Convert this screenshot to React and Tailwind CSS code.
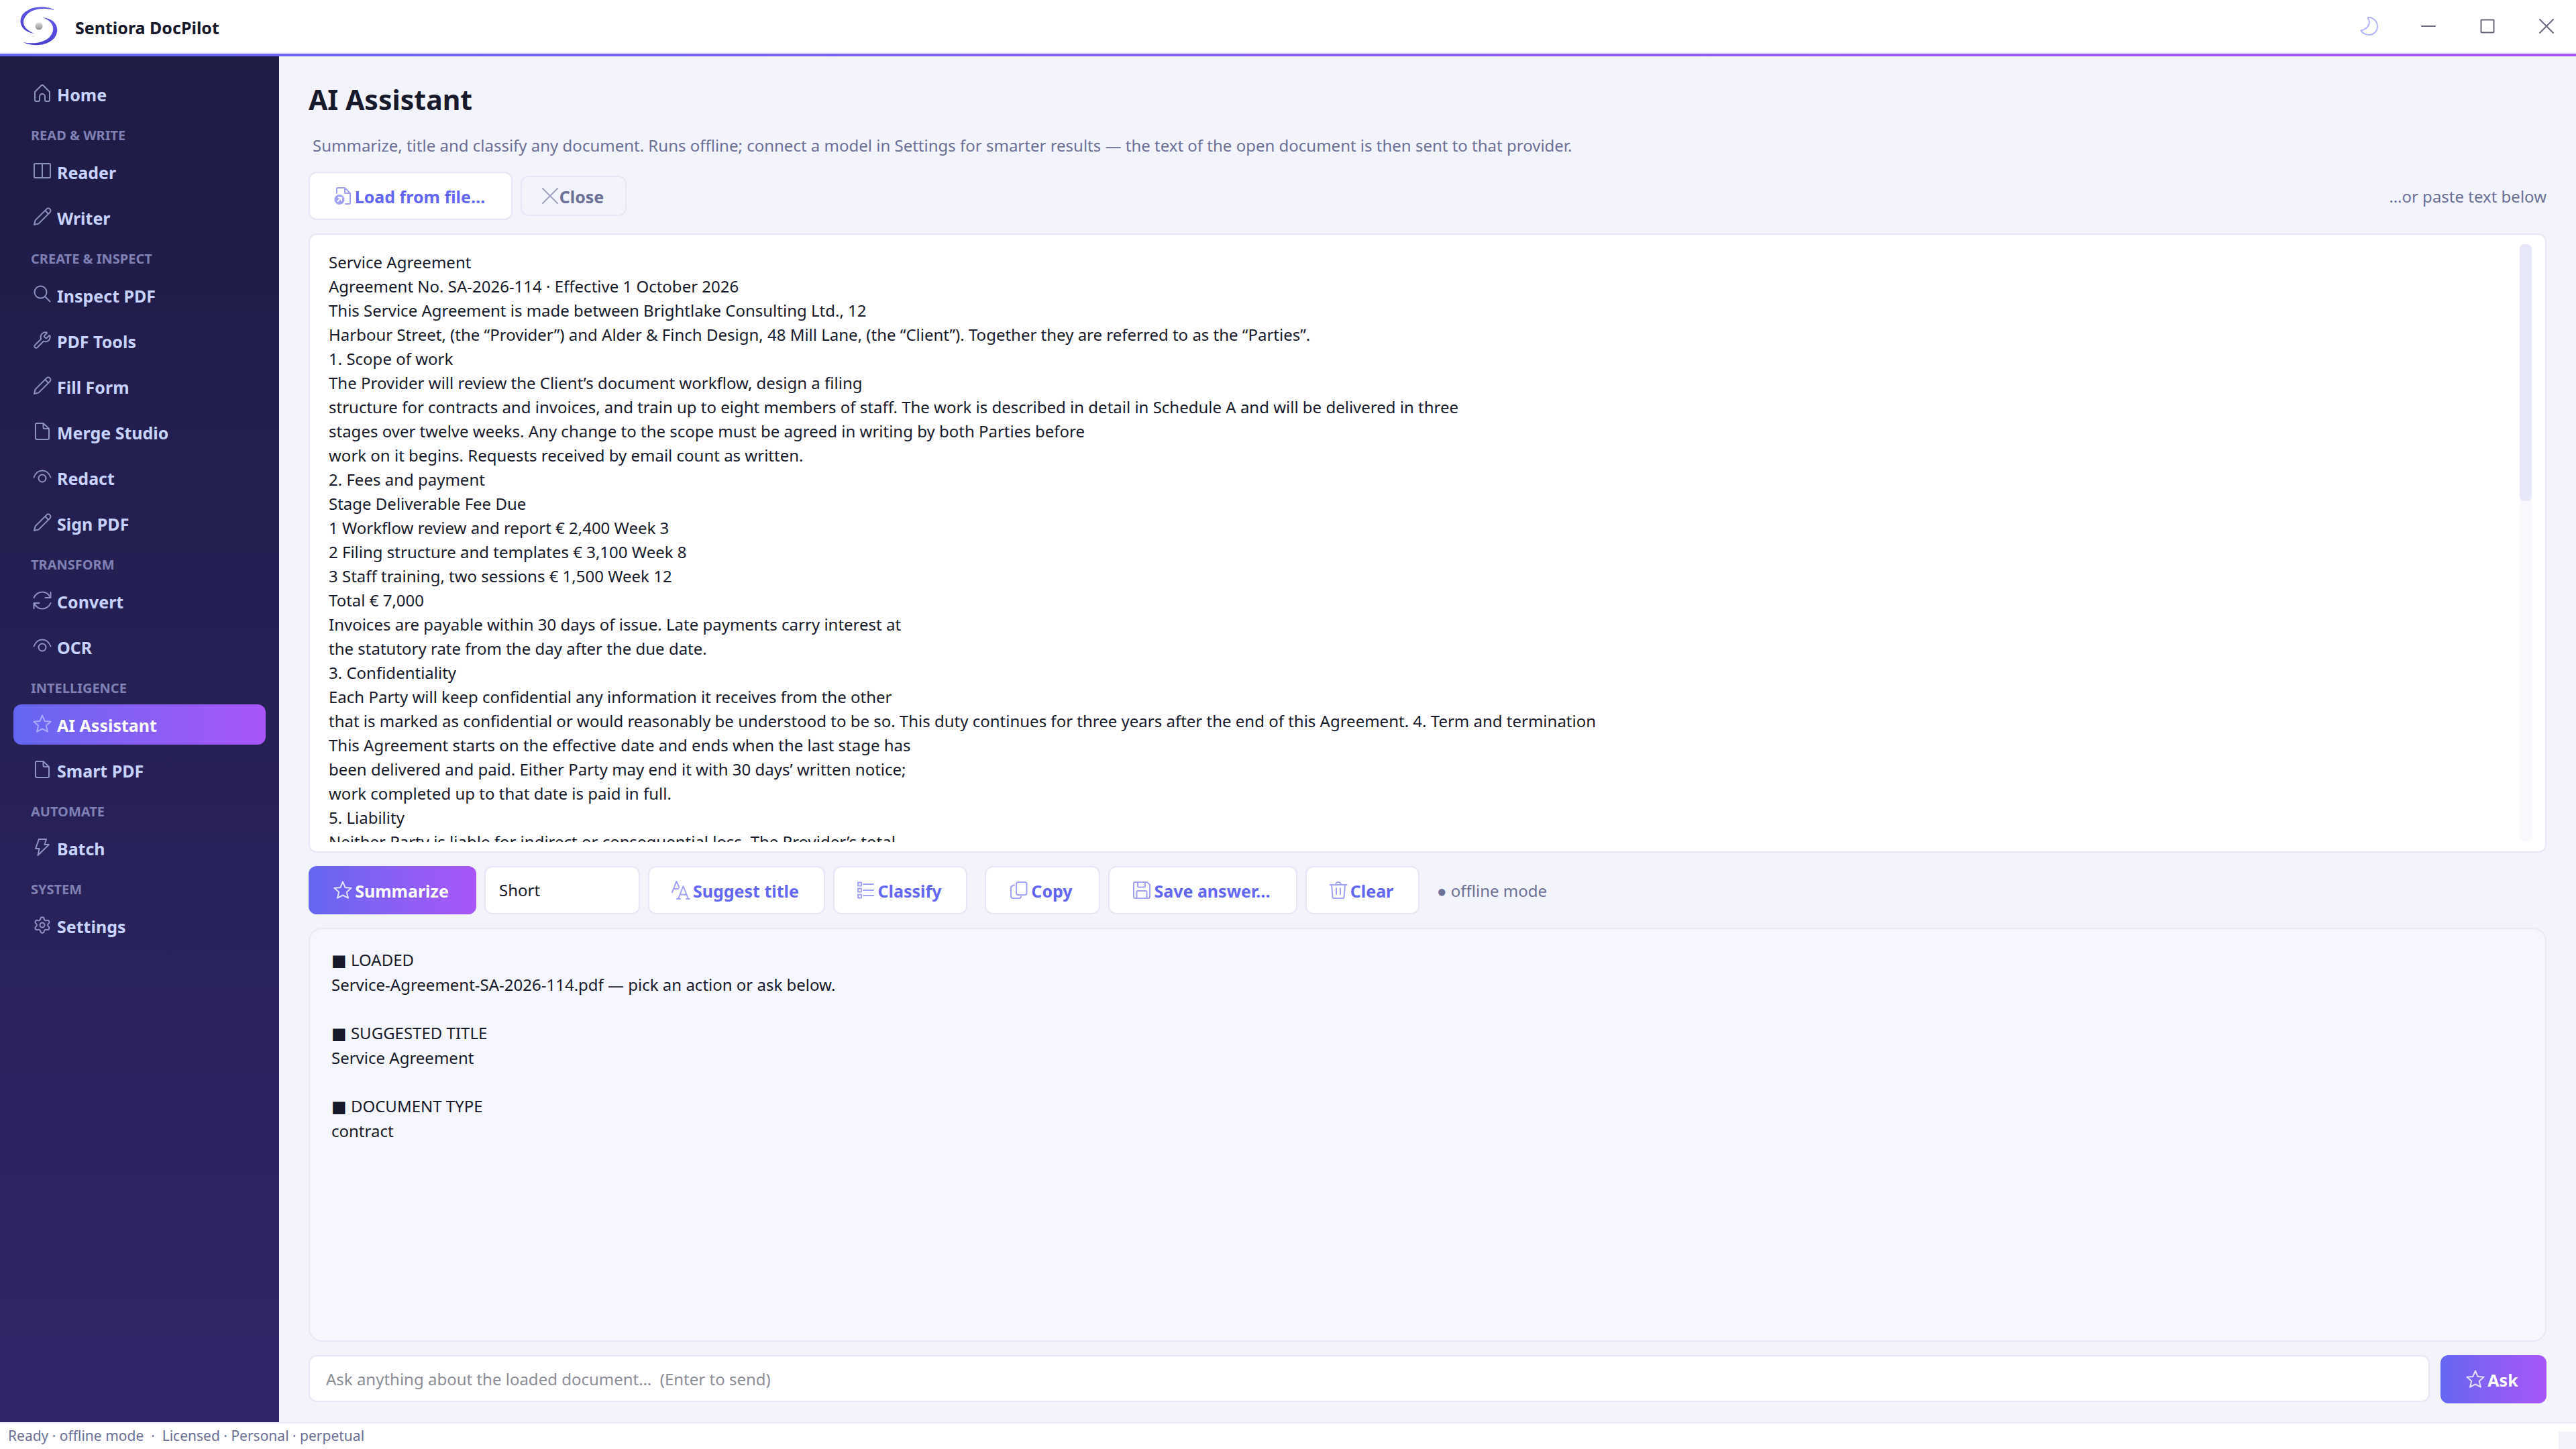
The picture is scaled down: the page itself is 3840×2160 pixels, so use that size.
import React, { useState } from 'react';
import { Settings, Wrench } from 'lucide-react';

const Svg = ({ children }) => (
  <svg
    viewBox="0 0 28 28"
    fill="none"
    stroke="currentColor"
    strokeWidth="2"
    strokeLinejoin="round"
    strokeLinecap="round"
    aria-hidden="true"
    className="size-7 shrink-0"
  >
    {children}
  </svg>
);

const HomeIcon = () => (
  <Svg>
    <path d="M3 12 12.7 2.2a1.8 1.8 0 0 1 2.6 0L25 12v12a2 2 0 0 1-2 2h-3a2 2 0 0 1-2-2v-5a4 4 0 0 0-8 0v5a2 2 0 0 1-2 2H5a2 2 0 0 1-2-2z" />
  </Svg>
);

const BookIcon = () => (
  <Svg>
    <rect x="2" y="3" width="24" height="21" rx="1" />
    <path d="M14 3v21" />
  </Svg>
);

const PencilIcon = () => (
  <Svg>
    <path d="M2 26l1.6-6.6L20.4 2.6a3.4 3.4 0 0 1 5 5L8.6 24.4zM18.2 4.8l5 5" />
  </Svg>
);

const SearchIcon = () => (
  <Svg>
    <circle cx="11.5" cy="10.5" r="9" />
    <path d="M18 17l7.5 7.5" />
  </Svg>
);

const WrenchIcon = () => <Wrench strokeWidth={1.7} className="size-7 shrink-0" aria-hidden="true" />;

const GearIcon = () => <Settings strokeWidth={1.7} className="size-7 shrink-0" aria-hidden="true" />;

const FileIcon = () => (
  <Svg>
    <path d="M15.5 2H6a2 2 0 0 0-2 2v20a2 2 0 0 0 2 2h16a2 2 0 0 0 2-2V10zM15.5 2v6a2 2 0 0 0 2 2H24" />
  </Svg>
);

const EyeIcon = () => (
  <Svg>
    <path d="M1.5 14.5C4 8 8.5 4.5 14 4.5S24 8 26.5 14.5" />
    <circle cx="14" cy="16" r="5.5" />
  </Svg>
);

const SyncIcon = () => (
  <Svg>
    <path d="M1.5 10C3.5 5 8.5 1.5 14 1.5c5 0 9.5 3 12 8M26.5 2v8h-8M26.5 18c-2 5-7 8.5-12.5 8.5-5 0-9.5-3-12-8M1.5 26v-8h8" />
  </Svg>
);

const StarIcon = () => (
  <Svg>
    <path d="M14 1.5l3.6 8.4 9 .8-6.8 6 2.2 9-8-4.2-8 4.2 2.2-9-6.8-6 9-.8z" />
  </Svg>
);

const BoltIcon = () => (
  <Svg>
    <path d="M9 2h11l-2.5 8H24L7.5 26l2-10H4z" />
  </Svg>
);

const LoadIcon = () => (
  <Svg>
    <path d="M5 10V3.5A1.5 1.5 0 0 1 6.5 2H17l8 8v14.5a1.5 1.5 0 0 1-1.5 1.5H18M17 2v8h8" />
    <circle cx="9" cy="19.5" r="7.5" fill="currentColor" stroke="none" />
    <path d="M6.5 22l5-5M7.5 16.5H12V21" stroke="white" />
  </Svg>
);

const XIcon = () => (
  <Svg>
    <path d="M3 3l22 22M25 3L3 25" />
  </Svg>
);

const TitleIcon = () => (
  <Svg>
    <path d="M1 17L7.5 1l4 9M3.500 12H10M10 27l7.500-19L25 27M12.500 20.500H22M8 27h5M22 27h5" />
  </Svg>
);

const ListIcon = () => (
  <Svg>
    <path d="M3 2.5h5v5H3zM3 11.5h5v5H3zM3 20.5h5v5H3zM11 5h15M11 14h15M11 22h15" />
  </Svg>
);

const CopyIcon = () => (
  <Svg>
    <rect x="10" y="2" width="15.5" height="19" rx="3" />
    <path d="M7 6.5l-3 1a3 3 0 0 0-2 3V23a3 3 0 0 0 3 3h9a3 3 0 0 0 3-2.5" />
  </Svg>
);

const SaveIcon = () => (
  <Svg>
    <path d="M4 2h18l4 4v18a2 2 0 0 1-2 2H4a2 2 0 0 1-2-2V4a2 2 0 0 1 2-2zM8 2v6a1.5 1.5 0 0 0 1.5 1.5h8A1.5 1.5 0 0 0 19 8V2M6.5 26v-9.5A1.5 1.5 0 0 1 8 15h12a1.5 1.5 0 0 1 1.5 1.5V26" />
  </Svg>
);

const TrashIcon = () => (
  <Svg>
    <path d="M1.5 6h25M4 6l1.5 18.5a2 2 0 0 0 2 1.5h13a2 2 0 0 0 2-1.5L24 6M10 6a4 4 0 0 1 8 0M11 11v9M17 11v9" />
  </Svg>
);

const Logo = () => (
  <svg viewBox="0 0 60 60" className="size-[60px]" aria-hidden="true">
    <defs>
      <linearGradient id="swirl" x1="0" y1="0" x2="0" y2="1">
        <stop offset="0" stopColor="#6058e8" />
        <stop offset="1" stopColor="#4a40d0" />
      </linearGradient>
      <linearGradient id="pearl" x1="0" y1="0" x2="0" y2="1">
        <stop offset="0" stopColor="#dddddd" />
        <stop offset="1" stopColor="#8f8f8f" />
      </linearGradient>
    </defs>
    <path
      fill="url(#swirl)"
      d="M52 5C36-2 17 1 7 11-2 21 2 38 23 41 6 34 3 23 12 13 20 4 37 2 52 6z"
    />
    <path
      fill="url(#swirl)"
      d="M35 17c16 1 24 11 22 22C54 55 30 64 6 54c20 4 37-1 43-12 5-9 2-20-14-25z"
    />
    <circle cx="30" cy="30" r="5.5" fill="url(#pearl)" />
  </svg>
);

const navigation = [
  { items: [{ label: 'Home', icon: HomeIcon }] },
  {
    title: 'READ & WRITE',
    items: [
      { label: 'Reader', icon: BookIcon },
      { label: 'Writer', icon: PencilIcon },
    ],
  },
  {
    title: 'CREATE & INSPECT',
    items: [
      { label: 'Inspect PDF', icon: SearchIcon },
      { label: 'PDF Tools', icon: WrenchIcon },
      { label: 'Fill Form', icon: PencilIcon },
      { label: 'Merge Studio', icon: FileIcon },
      { label: 'Redact', icon: EyeIcon },
      { label: 'Sign PDF', icon: PencilIcon },
    ],
  },
  {
    title: 'TRANSFORM',
    items: [
      { label: 'Convert', icon: SyncIcon },
      { label: 'OCR', icon: EyeIcon },
    ],
  },
  {
    title: 'INTELLIGENCE',
    items: [
      { label: 'AI Assistant', icon: StarIcon },
      { label: 'Smart PDF', icon: FileIcon },
    ],
  },
  { title: 'AUTOMATE', items: [{ label: 'Batch', icon: BoltIcon }] },
  { title: 'SYSTEM', items: [{ label: 'Settings', icon: GearIcon }] },
];

const documentText = `Service Agreement
Agreement No. SA-2026-114 · Effective 1 October 2026
This Service Agreement is made between Brightlake Consulting Ltd., 12
Harbour Street, (the “Provider”) and Alder & Finch Design, 48 Mill Lane, (the “Client”). Together they are referred to as the “Parties”.
1. Scope of work
The Provider will review the Client’s document workflow, design a filing
structure for contracts and invoices, and train up to eight members of staff. The work is described in detail in Schedule A and will be delivered in three
stages over twelve weeks. Any change to the scope must be agreed in writing by both Parties before
work on it begins. Requests received by email count as written.
2. Fees and payment
Stage Deliverable Fee Due
1 Workflow review and report € 2,400 Week 3
2 Filing structure and templates € 3,100 Week 8
3 Staff training, two sessions € 1,500 Week 12
Total € 7,000
Invoices are payable within 30 days of issue. Late payments carry interest at
the statutory rate from the day after the due date.
3. Confidentiality
Each Party will keep confidential any information it receives from the other
that is marked as confidential or would reasonably be understood to be so. This duty continues for three years after the end of this Agreement. 4. Term and termination
This Agreement starts on the effective date and ends when the last stage has
been delivered and paid. Either Party may end it with 30 days’ written notice;
work completed up to that date is paid in full.
5. Liability
Neither Party is liable for indirect or consequential loss. The Provider’s total`;

const answers = [
  { title: 'LOADED', body: 'Service-Agreement-SA-2026-114.pdf — pick an action or ask below.' },
  { title: 'SUGGESTED TITLE', body: 'Service Agreement' },
  { title: 'DOCUMENT TYPE', body: 'contract' },
];

const ActionButton = ({ icon: Icon, label, className }) => (
  <button
    type="button"
    className={`flex h-[72px] items-center justify-center gap-1 rounded-xl border-2 border-[#e6e6f7] bg-white pr-1 text-[25px] font-bold text-[#6366f1] ${className}`}
  >
    <span className="opacity-60"><Icon /></span>
    <span className="pt-0.5">{label}</span>
  </button>
);

const PrimaryButton = ({ icon: Icon, label, className, type = 'button' }) => (
  <button
    type={type}
    className={`flex h-[72px] items-center justify-center gap-1 rounded-xl bg-linear-to-r from-[#6366f1] to-[#a855f7] pr-1 text-[25px] font-bold text-white ${className}`}
  >
    <span className="opacity-80"><Icon /></span>
    <span className="pt-0.5">{label}</span>
  </button>
);

const TitleBar = () => (
  <header className="flex h-20 shrink-0 items-center border-b-2 border-[#ececf6] bg-white pl-7">
    <Logo />
    <span className="ml-6 pt-1 text-[25px] font-bold">Sentiora DocPilot</span>
    <div className="ml-auto flex h-full text-[#6b6b80]">
      <button type="button" aria-label="Dark mode" className="flex w-[88px] items-center justify-center text-[#b4b4fb]">
        <Svg>
          <path d="M12 1c8-.5 14 6 14 13.5S20 27 14 27C8.5 27 3 24 1.5 20.5 9 18.500 14 14 14 7c0-2.500-3-4-2-6z" />
        </Svg>
      </button>
      <button type="button" aria-label="Minimize" className="flex w-[88px] items-center justify-center">
        <Svg>
          <path d="M4 14h20" />
        </Svg>
      </button>
      <button type="button" aria-label="Maximize" className="flex w-[88px] items-center justify-center">
        <Svg>
          <rect x="4.5" y="4.5" width="19" height="19" rx="1" />
        </Svg>
      </button>
      <button type="button" aria-label="Close window" className="flex w-[88px] items-center justify-center">
        <Svg>
          <path d="M4 4l20 20M24 4L4 24" />
        </Svg>
      </button>
    </div>
  </header>
);

const Sidebar = ({ active, onSelect }) => (
  <nav className="flex w-[416px] shrink-0 flex-col gap-2 bg-linear-to-b from-[#1e1b45] to-[#2f2668] px-5 pt-[26px]">
    {navigation.map((group) => (
      <React.Fragment key={group.title || 'top'}>
        {group.title && (
          <h2 className="h-10 pl-[26px] text-[20px] leading-[48px] font-bold text-[#7f80b3]">{group.title}</h2>
        )}
        {group.items.map(({ label, icon: Icon }) => (
          <button
            key={label}
            type="button"
            onClick={() => onSelect(label)}
            className={`flex h-[60px] items-center gap-2 rounded-xl pl-[29px] text-left text-[25px] font-bold ${
              active === label
                ? 'bg-linear-to-r from-[#6366f1] to-[#a855f7] text-white'
                : 'text-[#c7d2fe]'
            }`}
          >
            <span className="pb-0.5 text-[#c7d2fe] opacity-65"><Icon /></span>
            <span className="pt-0.5">{label}</span>
          </button>
        ))}
      </React.Fragment>
    ))}
  </nav>
);

const App = () => {
  const [active, setActive] = useState('AI Assistant');
  const [source, setSource] = useState(documentText);
  const [question, setQuestion] = useState('');

  return (
    <div className="flex h-screen flex-col bg-[#f3f3fc] font-['Noto_Sans',sans-serif] text-[24px] leading-9 text-[#171a2b]">
      <TitleBar />
      <div className="h-1 shrink-0 bg-linear-to-r from-[#6366f1] to-[#a855f7]" />

      <div className="flex min-h-0 flex-1">
        <Sidebar active={active} onSelect={setActive} />

        <main className="flex min-w-0 flex-1 flex-col gap-5 px-11 pt-[34px] pb-7">
          <h1 className="text-[41px] leading-[60px] font-bold">AI Assistant</h1>
          <p className="pl-1.5 leading-[38px] text-[#6b7096]">
            Summarize, title and classify any document. Runs offline; connect a model in Settings for smarter
            results — the text of the open document is then sent to that provider.
          </p>

          <div className="flex items-center gap-3">
            <ActionButton icon={LoadIcon} label="Load from file…" className="w-[304px]" />
            <button
              type="button"
              className="flex h-[60px] w-[158px] items-center justify-center rounded-xl border-2 border-[#e6e6f7] pr-1 text-[25px] font-bold text-[#6b7096]"
            >
              <span className="opacity-60"><XIcon /></span>
              <span className="pt-0.5">Close</span>
            </button>
            <label htmlFor="source" className="ml-auto pt-0.5 text-[#6b7096]">…or paste text below</label>
          </div>

          {/* Source document */}
          <div className="flex min-h-0 flex-3 rounded-xl border-2 border-[#e6e6f7] bg-white">
            <div className="my-3.5 mr-5 ml-7 flex min-w-0 flex-1">
              <textarea
                id="source"
                value={source}
                onChange={(e) => setSource(e.target.value)}
                className="min-w-0 flex-1 resize-none overflow-hidden pt-[9px] outline-none"
              />
              <div className="w-[18px] rounded-lg bg-[#f8f8fd]">
                <div className="h-[43%] rounded-lg bg-[#e6e7f8]" />
              </div>
            </div>
          </div>

          <div className="flex items-center gap-3">
            <PrimaryButton icon={StarIcon} label="Summarize" className="w-[250px]" />
            <select
              aria-label="Summary length"
              className="h-[72px] w-[232px] appearance-none rounded-xl border-2 border-[#e6e6f7] bg-white px-5"
            >
              <option>Short</option>
              <option>Medium</option>
              <option>Long</option>
            </select>
            <ActionButton icon={TitleIcon} label="Suggest title" className="w-[264px]" />
            <ActionButton icon={ListIcon} label="Classify" className="w-[200px]" />
            <ActionButton icon={CopyIcon} label="Copy" className="ml-3.5 w-[172px]" />
            <ActionButton icon={SaveIcon} label="Save answer…" className="w-[282px]" />
            <ActionButton icon={TrashIcon} label="Clear" className="w-[170px]" />
            <span className="ml-3.5 pt-0.5 text-[#6b7096]">● offline mode</span>
          </div>

          {/* Answer */}
          <div className="min-h-0 flex-2 overflow-hidden rounded-[20px] border-2 border-[#e8e8f8] bg-[#f6f6ff]">
            <div className="flex flex-col gap-9 px-8 py-7">
              {answers.map(({ title, body }) => (
                <section key={title}>
                  <h3>
                    <span className="font-['DejaVu_Sans']">■</span> {title}
                  </h3>
                  <p>{body}</p>
                </section>
              ))}
            </div>
          </div>

          <form className="flex items-start gap-4" onSubmit={(e) => e.preventDefault()}>
            <input
              type="text"
              aria-label="Question"
              value={question}
              onChange={(e) => setQuestion(e.target.value)}
              placeholder="Ask anything about the loaded document…  (Enter to send)"
              className="h-[70px] min-w-0 flex-1 rounded-xl border-2 border-[#e6e6f7] bg-white px-6 outline-none placeholder:text-[#8b8d95]"
            />
            <PrimaryButton type="submit" icon={StarIcon} label="Ask" className="w-[158px]" />
          </form>
        </main>
      </div>

      <footer className="flex h-10 shrink-0 justify-between border-t-2 border-[#ececf6] bg-white pl-3 text-[21px] text-[#6b7096]">
        <span className="whitespace-pre">Ready · offline mode  ·  Licensed · Personal · perpetual</span>
        <span className="h-[26px] w-[26px] self-end bg-[#f3f3fc]" />
      </footer>
    </div>
  );
};

export default App;
